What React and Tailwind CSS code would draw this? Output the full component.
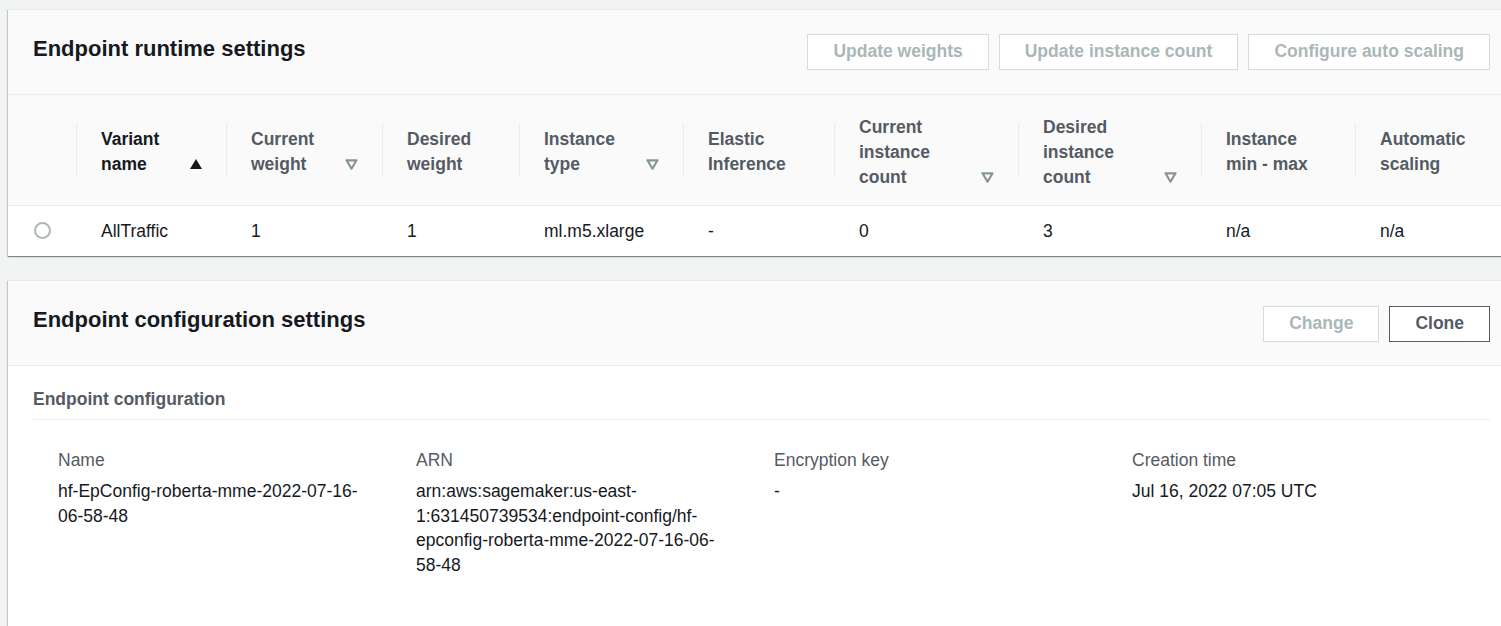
import React from "react";

const cols = [
  { lines: ["Variant", "name"], sort: "asc" },
  { lines: ["Current", "weight"], sort: "none" },
  { lines: ["Desired", "weight"] },
  { lines: ["Instance", "type"], sort: "none" },
  { lines: ["Elastic", "Inference"] },
  { lines: ["Current", "instance", "count"], sort: "none" },
  { lines: ["Desired", "instance", "count"], sort: "none" },
  { lines: ["Instance", "min - max"] },
  { lines: ["Automatic", "scaling"] },
];

const row = ["AllTraffic", "1", "1", "ml.m5.xlarge", "-", "0", "3", "n/a", "n/a"];

const gridCols =
  "grid grid-cols-[68px_150px_156px_137px_164px_151px_184px_183px_154px_1fr]";

function SortAsc() {
  return (
    <svg width="12" height="10" viewBox="0 0 12 10" className="shrink-0 mb-[8px]">
      <polygon points="0,10 6,0 12,10" fill="#16191f" />
    </svg>
  );
}

function SortNone() {
  return (
    <svg width="13" height="11" viewBox="0 0 13 11" className="shrink-0 mb-[7px]">
      <polygon
        points="1.5,1.3 11.5,1.3 6.5,9.7"
        fill="none"
        stroke="#879596"
        strokeWidth="2.2"
        strokeLinejoin="round"
      />
    </svg>
  );
}

function Button({ children, disabled }) {
  return (
    <div
      className={
        "h-[36px] px-[25px] flex items-center bg-white border text-[17.5px] font-bold leading-none whitespace-nowrap " +
        (disabled
          ? "border-[#d5dbdb] text-[#aab7b8]"
          : "border-[#545b64] text-[#545b64]")
      }
    >
      {children}
    </div>
  );
}

const cardCls =
  "bg-white border-t border-[#eaeded] mr-[-14px] shadow-[0_1px_1px_0_rgba(0,28,36,0.3),1px_1px_1px_0_rgba(0,28,36,0.15),-1px_1px_1px_0_rgba(0,28,36,0.15)]";

function CardHeader({ title, children, btnTop }) {
  return (
    <div className="h-[85px] bg-[#fafafa] border-b border-[#eaeded] px-[25px] pt-[24px] flex justify-between items-start">
      <h2 className="text-[22px] leading-[30px] font-bold text-[#16191f]">{title}</h2>
      <div className={"flex gap-[10px] " + btnTop}>{children}</div>
    </div>
  );
}

function KV({ label, value }) {
  return (
    <div className="pr-[46px]">
      <div className="text-[17.5px] leading-[24.5px] text-[#545b64] mb-[7px]">{label}</div>
      <div className="text-[17.5px] leading-[24.5px] text-[#16191f]">{value}</div>
    </div>
  );
}

export default function App() {
  return (
    <div className="h-screen overflow-hidden bg-[#f2f3f3] pt-[9px] pl-[8px] font-['Liberation_Sans',Arial,sans-serif]">
      <div className={cardCls}>
        <CardHeader title="Endpoint runtime settings" btnTop="mt-0">
          <Button disabled>Update weights</Button>
          <Button disabled>Update instance count</Button>
          <Button disabled>Configure auto scaling</Button>
        </CardHeader>
        <div className={gridCols + " h-[111px] bg-[#fafafa] border-b border-[#eaeded]"}>
          <div />
          {cols.map((c, i) => (
            <div
              key={i}
              className="relative flex items-center pt-[4px] before:absolute before:left-0 before:top-[28px] before:h-[54px] before:w-px before:bg-[#eaeded]"
            >
              <div className="flex-1 flex justify-between items-end pl-[25px] pr-[24px]">
                <div
                  className={
                    "text-[17.5px] leading-[25px] font-bold whitespace-nowrap " +
                    (c.sort === "asc" ? "text-[#16191f]" : "text-[#545b64]")
                  }
                >
                  {c.lines.map((l, j) => (
                    <div key={j}>{l}</div>
                  ))}
                </div>
                {c.sort === "asc" && <SortAsc />}
                {c.sort === "none" && <SortNone />}
              </div>
            </div>
          ))}
        </div>
        <div className={gridCols + " h-[50px]"}>
          <div className="flex items-center pl-[26px] pb-[2px]">
            <div className="w-[17px] h-[17px] rounded-full border-2 border-[#aab7b8] bg-white" />
          </div>
          {row.map((v, i) => (
            <div
              key={i}
              className="flex items-center pl-[25px] pt-[1px] text-[17.5px] leading-[24.5px] text-[#16191f] whitespace-nowrap"
            >
              {v}
            </div>
          ))}
        </div>
      </div>

      <div className={cardCls + " mt-[24px]"}>
        <CardHeader title="Endpoint configuration settings" btnTop="mt-px">
          <Button disabled>Change</Button>
          <Button>Clone</Button>
        </CardHeader>
        <div className="px-[25px] pb-[80px]">
          <div className="pt-[21px] pb-[7px] border-b border-[#eaeded] text-[17.5px] leading-[24.5px] font-bold text-[#545b64]">
            Endpoint configuration
          </div>
          <div className="grid grid-cols-4 pl-[25px] pt-[28px]">
            <KV label="Name" value="hf-EpConfig-roberta-mme-2022-07-16-06-58-48" />
            <KV
              label="ARN"
              value="arn:aws:sagemaker:us-east-1:631450739534:endpoint-config/hf-epconfig-roberta-mme-2022-07-16-06-58-48"
            />
            <KV label="Encryption key" value="-" />
            <KV label="Creation time" value="Jul 16, 2022 07:05 UTC" />
          </div>
        </div>
      </div>
    </div>
  );
}
